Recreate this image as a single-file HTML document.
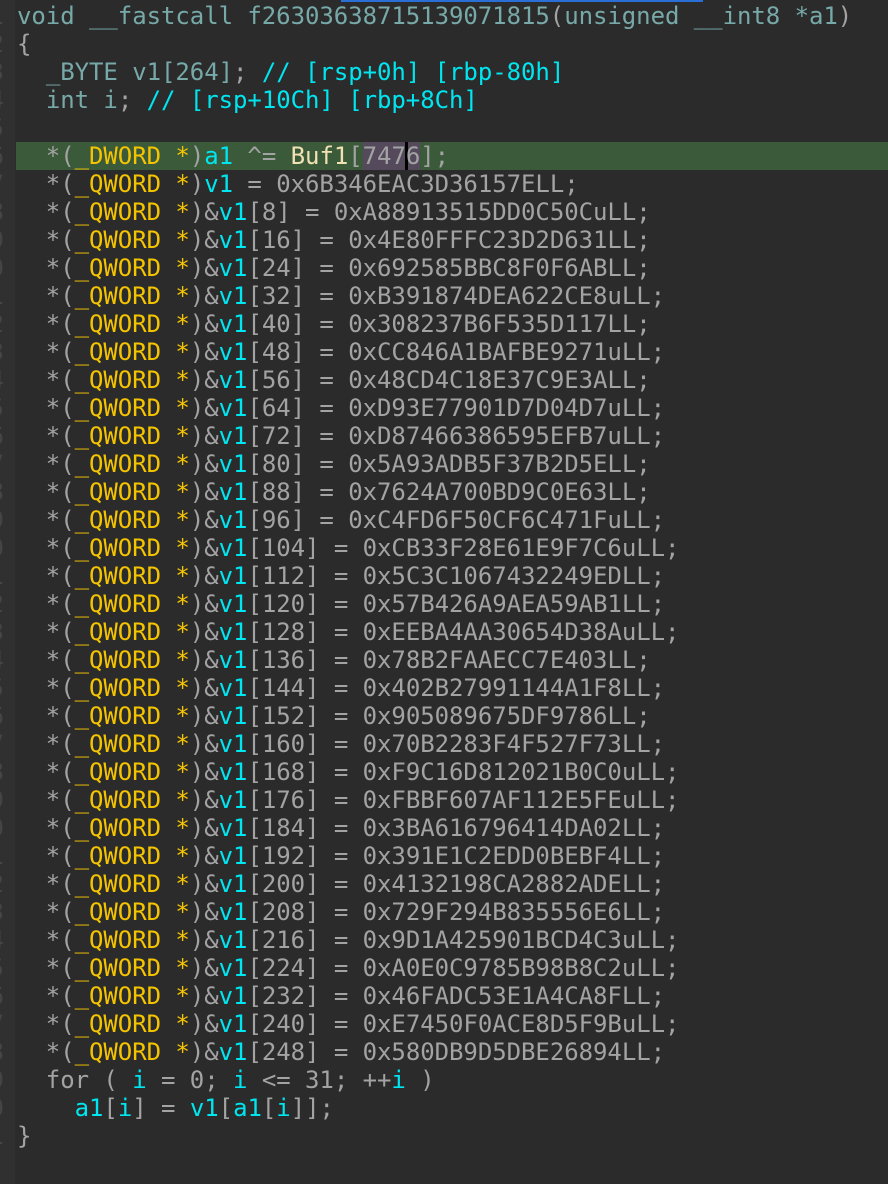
<!DOCTYPE html>
<html><head><meta charset="utf-8"><style>
html,body{margin:0;padding:0;background:#2b2b2b;width:888px;height:1184px;overflow:hidden}
#g{position:absolute;left:0;top:0;width:15px;height:1184px;background:#303030}
#bar{position:absolute;left:341px;top:0;width:362px;height:2px;background:#2a6fd6}
.l{position:absolute;left:0;width:888px;height:28px;font-family:"DejaVu Sans Mono","Liberation Mono",monospace;font-size:24px;line-height:28px;white-space:pre;color:#a3a3a3}
.l .n{position:absolute;left:-20px;width:24px;text-align:right;color:#454545;overflow:hidden}
.l .c{position:absolute;left:17px;letter-spacing:-0.05px}
.hl{background:#3a5a3a}
.k{color:#78a9a9}.cy{color:#00e6f0}.y{color:#f5c400}.b{color:#f1e2b4}.s{background:#554a5c}
.cur{display:inline-block;width:0;border-left:3px solid #000;height:28px;vertical-align:top;margin-left:-1px;margin-right:-2px}
</style></head><body>
<div id="g"></div><div id="bar"></div>
<div class="l" style="top:2px"><span class="n">1</span><span class="c"><span class="k">void __fastcall f26303638715139071815</span>(<span class="k">unsigned __int8 *a1</span>)</span></div>
<div class="l" style="top:30px"><span class="n">2</span><span class="c">{</span></div>
<div class="l" style="top:58px"><span class="n">3</span><span class="c">  <span class="k">_BYTE v1[264]</span>; <span class="cy">// [rsp+0h] [rbp-80h]</span></span></div>
<div class="l" style="top:86px"><span class="n">4</span><span class="c">  <span class="k">int i</span>; <span class="cy">// [rsp+10Ch] [rbp+8Ch]</span></span></div>
<div class="l" style="top:114px"><span class="n">5</span><span class="c"></span></div>
<div class="l hl" style="top:142px;left:16px"><span class="n" style="left:-36px">6</span><span class="c" style="left:1px">  *(<span class="y">_DWORD *</span>)<span class="cy">a1</span> ^= <span class="b">Buf1</span>[<span class="s">747<span class="cur"></span>6</span>];</span></div>
<div class="l" style="top:170px"><span class="n">7</span><span class="c">  *(<span class="y">_QWORD *</span>)<span class="cy">v1</span> = 0x6B346EAC3D36157ELL;</span></div>
<div class="l" style="top:198px"><span class="n">8</span><span class="c">  *(<span class="y">_QWORD *</span>)&amp;<span class="cy">v1</span>[8] = 0xA88913515DD0C50CuLL;</span></div>
<div class="l" style="top:226px"><span class="n">9</span><span class="c">  *(<span class="y">_QWORD *</span>)&amp;<span class="cy">v1</span>[16] = 0x4E80FFFC23D2D631LL;</span></div>
<div class="l" style="top:254px"><span class="n">0</span><span class="c">  *(<span class="y">_QWORD *</span>)&amp;<span class="cy">v1</span>[24] = 0x692585BBC8F0F6ABLL;</span></div>
<div class="l" style="top:282px"><span class="n">1</span><span class="c">  *(<span class="y">_QWORD *</span>)&amp;<span class="cy">v1</span>[32] = 0xB391874DEA622CE8uLL;</span></div>
<div class="l" style="top:310px"><span class="n">2</span><span class="c">  *(<span class="y">_QWORD *</span>)&amp;<span class="cy">v1</span>[40] = 0x308237B6F535D117LL;</span></div>
<div class="l" style="top:338px"><span class="n">3</span><span class="c">  *(<span class="y">_QWORD *</span>)&amp;<span class="cy">v1</span>[48] = 0xCC846A1BAFBE9271uLL;</span></div>
<div class="l" style="top:366px"><span class="n">4</span><span class="c">  *(<span class="y">_QWORD *</span>)&amp;<span class="cy">v1</span>[56] = 0x48CD4C18E37C9E3ALL;</span></div>
<div class="l" style="top:394px"><span class="n">5</span><span class="c">  *(<span class="y">_QWORD *</span>)&amp;<span class="cy">v1</span>[64] = 0xD93E77901D7D04D7uLL;</span></div>
<div class="l" style="top:422px"><span class="n">6</span><span class="c">  *(<span class="y">_QWORD *</span>)&amp;<span class="cy">v1</span>[72] = 0xD87466386595EFB7uLL;</span></div>
<div class="l" style="top:450px"><span class="n">7</span><span class="c">  *(<span class="y">_QWORD *</span>)&amp;<span class="cy">v1</span>[80] = 0x5A93ADB5F37B2D5ELL;</span></div>
<div class="l" style="top:478px"><span class="n">8</span><span class="c">  *(<span class="y">_QWORD *</span>)&amp;<span class="cy">v1</span>[88] = 0x7624A700BD9C0E63LL;</span></div>
<div class="l" style="top:506px"><span class="n">9</span><span class="c">  *(<span class="y">_QWORD *</span>)&amp;<span class="cy">v1</span>[96] = 0xC4FD6F50CF6C471FuLL;</span></div>
<div class="l" style="top:534px"><span class="n">0</span><span class="c">  *(<span class="y">_QWORD *</span>)&amp;<span class="cy">v1</span>[104] = 0xCB33F28E61E9F7C6uLL;</span></div>
<div class="l" style="top:562px"><span class="n">1</span><span class="c">  *(<span class="y">_QWORD *</span>)&amp;<span class="cy">v1</span>[112] = 0x5C3C1067432249EDLL;</span></div>
<div class="l" style="top:590px"><span class="n">2</span><span class="c">  *(<span class="y">_QWORD *</span>)&amp;<span class="cy">v1</span>[120] = 0x57B426A9AEA59AB1LL;</span></div>
<div class="l" style="top:618px"><span class="n">3</span><span class="c">  *(<span class="y">_QWORD *</span>)&amp;<span class="cy">v1</span>[128] = 0xEEBA4AA30654D38AuLL;</span></div>
<div class="l" style="top:646px"><span class="n">4</span><span class="c">  *(<span class="y">_QWORD *</span>)&amp;<span class="cy">v1</span>[136] = 0x78B2FAAECC7E403LL;</span></div>
<div class="l" style="top:674px"><span class="n">5</span><span class="c">  *(<span class="y">_QWORD *</span>)&amp;<span class="cy">v1</span>[144] = 0x402B27991144A1F8LL;</span></div>
<div class="l" style="top:702px"><span class="n">6</span><span class="c">  *(<span class="y">_QWORD *</span>)&amp;<span class="cy">v1</span>[152] = 0x905089675DF9786LL;</span></div>
<div class="l" style="top:730px"><span class="n">7</span><span class="c">  *(<span class="y">_QWORD *</span>)&amp;<span class="cy">v1</span>[160] = 0x70B2283F4F527F73LL;</span></div>
<div class="l" style="top:758px"><span class="n">8</span><span class="c">  *(<span class="y">_QWORD *</span>)&amp;<span class="cy">v1</span>[168] = 0xF9C16D812021B0C0uLL;</span></div>
<div class="l" style="top:786px"><span class="n">9</span><span class="c">  *(<span class="y">_QWORD *</span>)&amp;<span class="cy">v1</span>[176] = 0xFBBF607AF112E5FEuLL;</span></div>
<div class="l" style="top:814px"><span class="n">0</span><span class="c">  *(<span class="y">_QWORD *</span>)&amp;<span class="cy">v1</span>[184] = 0x3BA616796414DA02LL;</span></div>
<div class="l" style="top:842px"><span class="n">1</span><span class="c">  *(<span class="y">_QWORD *</span>)&amp;<span class="cy">v1</span>[192] = 0x391E1C2EDD0BEBF4LL;</span></div>
<div class="l" style="top:870px"><span class="n">2</span><span class="c">  *(<span class="y">_QWORD *</span>)&amp;<span class="cy">v1</span>[200] = 0x4132198CA2882ADELL;</span></div>
<div class="l" style="top:898px"><span class="n">3</span><span class="c">  *(<span class="y">_QWORD *</span>)&amp;<span class="cy">v1</span>[208] = 0x729F294B835556E6LL;</span></div>
<div class="l" style="top:926px"><span class="n">4</span><span class="c">  *(<span class="y">_QWORD *</span>)&amp;<span class="cy">v1</span>[216] = 0x9D1A425901BCD4C3uLL;</span></div>
<div class="l" style="top:954px"><span class="n">5</span><span class="c">  *(<span class="y">_QWORD *</span>)&amp;<span class="cy">v1</span>[224] = 0xA0E0C9785B98B8C2uLL;</span></div>
<div class="l" style="top:982px"><span class="n">6</span><span class="c">  *(<span class="y">_QWORD *</span>)&amp;<span class="cy">v1</span>[232] = 0x46FADC53E1A4CA8FLL;</span></div>
<div class="l" style="top:1010px"><span class="n">7</span><span class="c">  *(<span class="y">_QWORD *</span>)&amp;<span class="cy">v1</span>[240] = 0xE7450F0ACE8D5F9BuLL;</span></div>
<div class="l" style="top:1038px"><span class="n">8</span><span class="c">  *(<span class="y">_QWORD *</span>)&amp;<span class="cy">v1</span>[248] = 0x580DB9D5DBE26894LL;</span></div>
<div class="l" style="top:1066px"><span class="n">9</span><span class="c">  for ( <span class="cy">i</span> = 0; <span class="cy">i</span> &lt;= 31; ++<span class="cy">i</span> )</span></div>
<div class="l" style="top:1094px"><span class="n">0</span><span class="c">    <span class="cy">a1</span>[<span class="cy">i</span>] = <span class="cy">v1</span>[<span class="cy">a1</span>[<span class="cy">i</span>]];</span></div>
<div class="l" style="top:1122px"><span class="n">1</span><span class="c">}</span></div>
</body></html>
